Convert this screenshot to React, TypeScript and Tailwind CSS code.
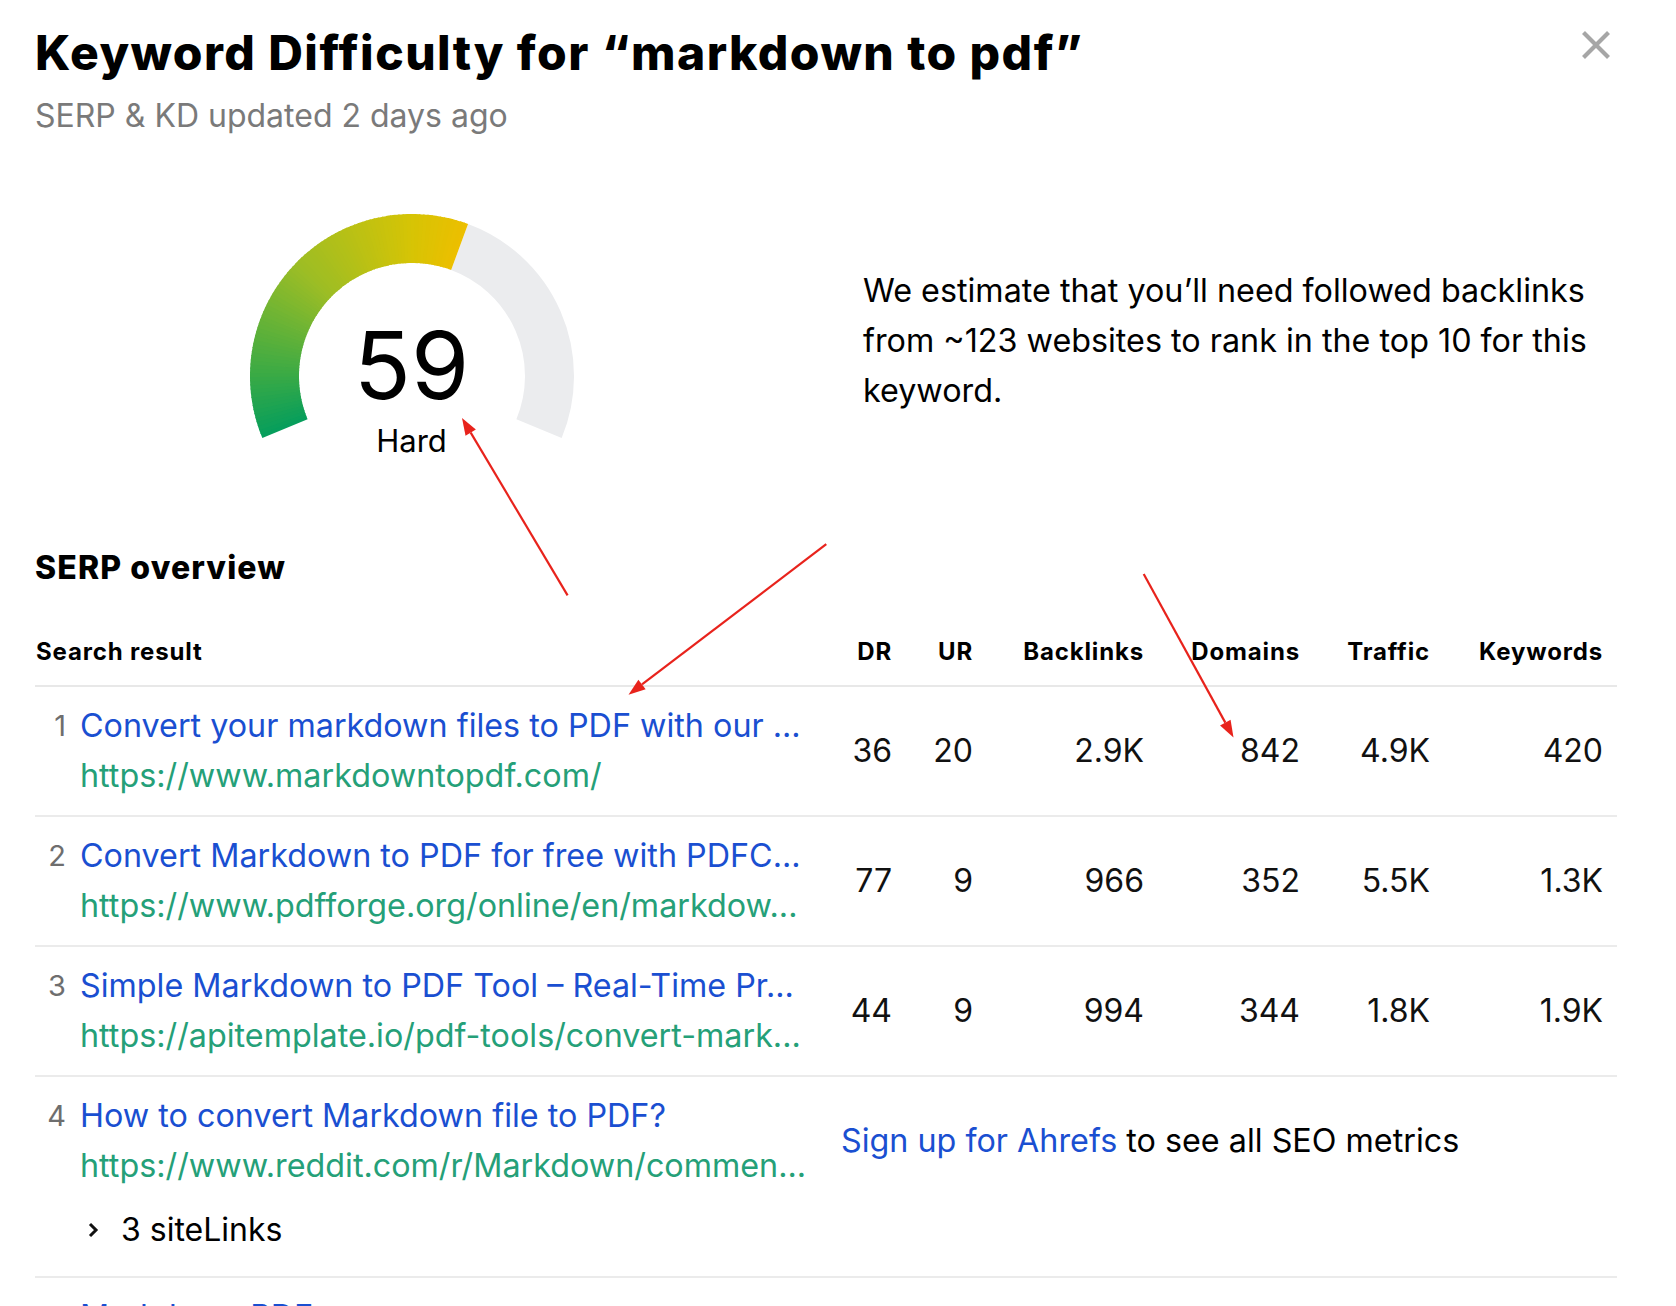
import React, { type JSX } from 'react'

const FONT = "font-['Inter','Noto_Sans',sans-serif]"

interface SerpRow
{
    pos: number;
    title: string;
    url: string;
    values?: string[];
    siteLinks?: number;
}

const rows: SerpRow[] = [
    { pos: 1, title: "Convert your markdown files to PDF with our ...", url: "https://www.markdowntopdf.com/", values: ["36", "20", "2.9K", "842", "4.9K", "420"] },
    { pos: 2, title: "Convert Markdown to PDF for free with PDFC...", url: "https://www.pdfforge.org/online/en/markdow...", values: ["77", "9", "966", "352", "5.5K", "1.3K"] },
    { pos: 3, title: "Simple Markdown to PDF Tool – Real-Time Pr...", url: "https://apitemplate.io/pdf-tools/convert-mark...", values: ["44", "9", "994", "344", "1.8K", "1.9K"] },
    { pos: 4, title: "How to convert Markdown file to PDF?", url: "https://www.reddit.com/r/Markdown/commen...", siteLinks: 3 },
    { pos: 5, title: "Markdown PDF", url: "https://marketplace.visualstudio.com/items?itemN..." },
]

const headers = ["DR", "UR", "Backlinks", "Domains", "Traffic", "Keywords"]

const GRID = "grid grid-cols-[775px_82px_81px_171px_156px_130px_173px]"

// gauge drawing helpers
const CX = 170
const CY = 170
const R = 137.5
const START = 202.5
const SWEEP = 225

const pt = (deg: number) =>
{
    const a = (deg * Math.PI) / 180
    return `${(CX + R * Math.cos(a)).toFixed(2)} ${(CY - R * Math.sin(a)).toFixed(2)}`
}

const arc = (from: number, to: number) =>
{
    const large = from - to > 180 ? 1 : 0
    return `M ${pt(from)} A ${R} ${R} 0 ${large} 1 ${pt(to)}`
}

// colour along the filled part of the arc (0 = bottom left, 1 = end of fill)
const stops: [number, number[]][] = [
    [0, [7, 158, 92]],
    [0.17, [58, 170, 69]],
    [0.5, [156, 189, 37]],
    [0.85, [214, 196, 5]],
    [1, [236, 191, 0]],
]

const colorAt = (t: number) =>
{
    for (let i = 1; i < stops.length; i++)
    {
        const [t1, c1] = stops[i]
        const [t0, c0] = stops[i - 1]
        if (t <= t1)
        {
            const k = (t - t0) / (t1 - t0)
            const c = c0.map((v, j) => Math.round(v + (c1[j] - v) * k))
            return `rgb(${c[0]},${c[1]},${c[2]})`
        }
    }
    return "rgb(236,191,0)"
}

const Gauge = ({ value }: { value: number }): JSX.Element =>
{
    const end = START - (SWEEP * value) / 100
    const n = 90
    const segs = []

    for (let i = 0; i < n; i++)
    {
        const a0 = START - ((START - end) * i) / n
        const a1 = START - ((START - end) * (i + 1)) / n - (i < n - 1 ? 0.4 : 0)
        segs.push(<path key={i} d={arc(a0, a1)} stroke={colorAt(i / (n - 1))} strokeWidth={49} fill="none" />)
    }

    return (
        <div className="relative w-[340px] h-[262px]">
            <svg width="340" height="250" viewBox="0 0 340 250">
                <path d={arc(end, START - SWEEP)} stroke="#ebecee" strokeWidth={49} fill="none" />
                {segs}
            </svg>
            <div className="absolute left-0 right-0 top-[104px] text-center text-[94px] leading-[110px] text-black">{value}</div>
            <div className="absolute left-0 right-0 top-[217px] text-center text-[31px] leading-[36px] text-black">Hard</div>
        </div>
    )
}

const Arrow = ({ x1, y1, x2, y2 }: { x1: number; y1: number; x2: number; y2: number }): JSX.Element =>
{
    const len = Math.hypot(x2 - x1, y2 - y1)
    const dx = (x2 - x1) / len
    const dy = (y2 - y1) / len
    const bx = x2 - dx * 17
    const by = y2 - dy * 17
    const w = 6

    return (
        <g>
            <line x1={x1} y1={y1} x2={bx} y2={by} stroke="#e8231c" strokeWidth={2.2} />
            <polygon points={`${x2},${y2} ${bx - dy * w},${by + dx * w} ${bx + dy * w},${by - dx * w}`} fill="#e8231c" />
        </g>
    )
}

const App = (): JSX.Element =>
{
    return (
        <div className={`relative w-[1676px] h-[1306px] overflow-hidden bg-white ${FONT}`}>
            <div className="pl-[35px] pr-[59px]">

                {/*Header*/}
                <div className="flex items-start justify-between pt-[24px]">
                    <h1 className="text-[48px] leading-[58px] font-extrabold tracking-[0.03em] text-black">Keyword Difficulty for “markdown to pdf”</h1>
                    <button className="mt-[6px] mr-[6px] w-[30px] h-[30px]">
                        <svg width="30" height="30" viewBox="0 0 30 30">
                            <path d="M2.5 2.5 L27.5 27.5 M27.5 2.5 L2.5 27.5" stroke="#a6a6a6" strokeWidth={4.2} />
                        </svg>
                    </button>
                </div>
                <div className="mt-[14px] text-[32px] leading-[40px] text-[#7a7a7a]">SERP &amp; KD updated 2 days ago</div>

                {/*Gauge and estimate*/}
                <div className="flex mt-[70px]">
                    <div className="w-[753px] flex justify-center">
                        <Gauge value={59} />
                    </div>
                    <p className="ml-[75px] mt-[60px] flex-1 text-[32.3px] leading-[50px] text-black">
                        We estimate that you’ll need followed backlinks from ~123 websites to rank in the top 10 for this keyword.
                    </p>
                </div>

                {/*SERP overview*/}
                <h2 className="mt-[80px] text-[32px] leading-[40px] font-extrabold tracking-[0.035em] text-black">SERP overview</h2>

                <div className={`${GRID} mt-[49px] pr-[14px] pb-[18px] border-b-2 border-[#e8e8e8] text-[24px] leading-[30px] font-bold tracking-[0.035em] text-black`}>
                    <div className="pl-[1px]">Search result</div>
                    {headers.map((h) => (
                        <div key={h} className="text-right">{h}</div>
                    ))}
                </div>

                {rows.map((r) => (
                    <div key={r.pos} className="border-b-2 border-[#ebebeb] pt-[14px] pb-[14px]">
                        <div className={`${GRID} pr-[14px] items-center`}>
                            <div className="flex">
                                <div className="w-[31px] text-right text-[29px] leading-[50px] text-[#6e6e6e]">{r.pos}</div>
                                <div className="ml-[14px] w-[726px] overflow-hidden whitespace-nowrap">
                                    <div className="text-[32.3px] leading-[50px] text-[#1a4fd1]">{r.title}</div>
                                    <div className="text-[32.3px] leading-[50px] text-[#25a078]">{r.url}</div>
                                </div>
                            </div>
                            {r.values ? r.values.map((v, i) => (
                                <div key={i} className="text-right text-[32px] leading-[50px] text-[#111]">{v}</div>
                            )) : r.pos === 4 ? (
                                <div className="col-span-6 pl-[31px] text-[32.3px] leading-[50px] text-black">
                                    <span className="text-[#1a4fd1]">Sign up for Ahrefs</span> to see all SEO metrics
                                </div>
                            ) : null}
                        </div>
                        {r.siteLinks && (
                            <div className="flex items-center mt-[14px] ml-[45px] text-[32px] leading-[50px] text-black">
                                <svg width="18" height="20" viewBox="0 0 18 20" className="ml-[5px]">
                                    <path d="M5 4 L11 10 L5 16" stroke="#111" strokeWidth={3} fill="none" />
                                </svg>
                                <span className="ml-[18px]">{r.siteLinks} siteLinks</span>
                            </div>
                        )}
                        {r.siteLinks && <div className="h-[7px]" />}
                    </div>
                ))}
            </div>

            {/*Annotation arrows*/}
            <svg className="absolute inset-0 pointer-events-none" width="1676" height="1306">
                <Arrow x1={567.6} y1={595.4} x2={462} y2={418} />
                <Arrow x1={826.3} y1={544.1} x2={628.5} y2={694.8} />
                <Arrow x1={1143.7} y1={574} x2={1233.5} y2={737.5} />
            </svg>
        </div>
    )
}

export default App
